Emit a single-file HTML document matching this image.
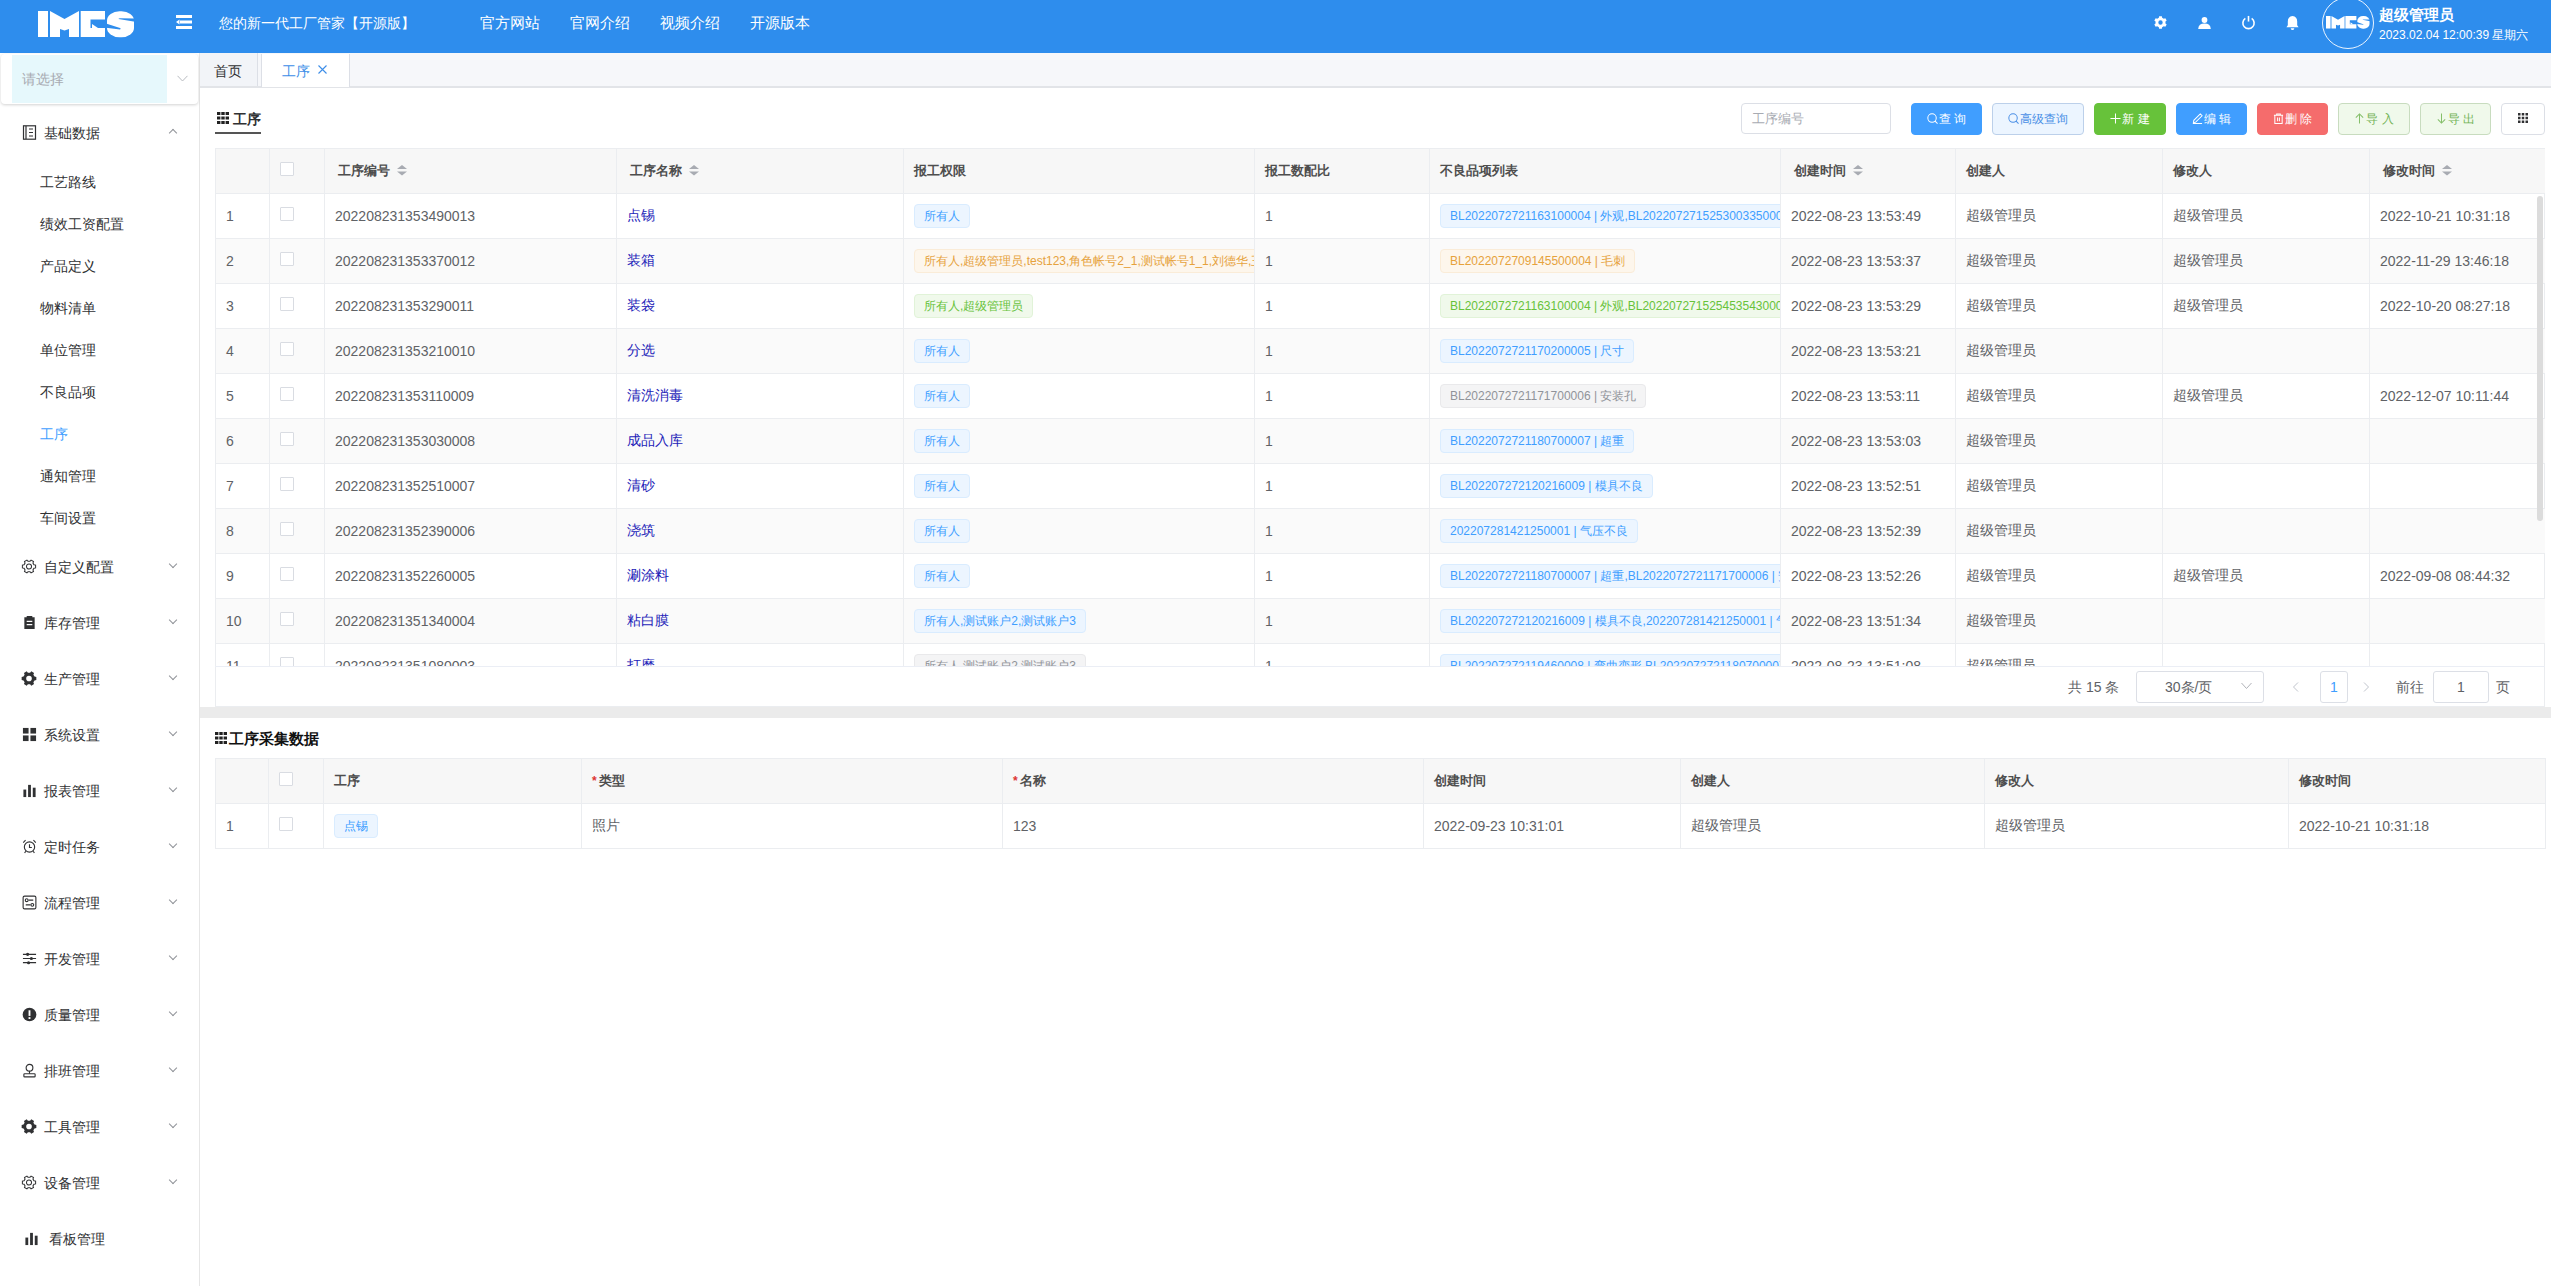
<!DOCTYPE html><html><head><meta charset="utf-8"><style>
*{box-sizing:border-box;margin:0;padding:0}
html,body{width:2551px;height:1286px;overflow:hidden;background:#fff;font-family:"Liberation Sans",sans-serif;color:#606266;font-size:14px}
.abs{position:absolute}
#hdr{position:absolute;left:0;top:0;width:2551px;height:53px;background:#2e8ded}
#hdr .t{position:absolute;color:#fff;font-size:14px;line-height:20px;white-space:nowrap}
#side{position:absolute;left:0;top:53px;width:200px;height:1233px;background:#fff;border-right:1px solid #e6e6e6}
.sel{position:absolute;left:1px;top:1px;width:197px;height:50px;border-radius:4px;box-shadow:0 1px 3px rgba(0,0,0,.18);background:#fff}
.sel .fill{position:absolute;left:11px;top:1px;width:155px;height:48px;background:#e6f8fc}
.mi{position:absolute;white-space:nowrap;font-size:14px;line-height:20px;color:#303133}
.arr{position:absolute;width:7px;height:7px;border-right:1px solid #909399;border-bottom:1px solid #909399}
#tabs{position:absolute;left:200px;top:53px;width:2351px;height:35px;background:#f6f7fa;border-bottom:2px solid #e2e4e8}
.tab{position:absolute;top:0;height:33px;font-size:14px;line-height:33px;white-space:nowrap}
table.g{position:absolute;border-collapse:collapse;table-layout:fixed;font-size:14px}
table.g td,table.g th{border:1px solid #ebedf0;white-space:nowrap;overflow:hidden;text-align:left;font-weight:normal;padding:0 10px;vertical-align:middle}
table.g th{background:#f7f7f7;font-weight:bold;color:#4e4e4e;height:45px;font-size:13px}
table.g td{height:45px;color:#606266}
table.g tr.s td{background:#fafafa}
.cb{display:inline-block;width:14px;height:14px;border:1px solid #d9dce2;border-radius:1px;background:#fff;vertical-align:middle;position:relative;top:-3px}
.tag{display:inline-block;height:24px;line-height:22px;padding:0 9px;font-size:12px;border-radius:4px;border:1px solid;white-space:nowrap;vertical-align:middle}
.tb{background:#ecf5ff;border-color:#d9ecff;color:#409eff}
.to{background:#fdf6ec;border-color:#faecd8;color:#e6a23c}
.tg{background:#f0f9eb;border-color:#e1f3d8;color:#67c23a}
.ti{background:#f4f4f5;border-color:#e9e9eb;color:#909399}
table.g td.nm{color:#2323b8}
.btn{position:absolute;top:103px;height:32px;border-radius:4px;font-size:12px;line-height:30px;text-align:center;border:1px solid;white-space:nowrap}
</style></head><body>
<div id="hdr">
<svg class="abs" style="left:38px;top:11px" width="97" height="27" viewBox="0 0 97 27">
<g fill="#fff">
<rect x="0" y="0" width="10" height="26"/>
<path d="M12 0 L26.5 8 L41 0 V26 H31 V18 L26.5 19.5 L22 18 V26 H12 Z"/>
<path d="M42.7 0 H67 V8.6 H52.5 V17 H67 V26 H42.7 Z"/>
<path d="M54 13 L60 17 H54 Z"/>
<rect x="69" y="0.2" width="27" height="26.1" rx="12.5" ry="9.5"/>
</g><g fill="#2e8ded"><path d="M80.5 8 Q80.5 7.2 82 7.2 L97 7.4 V10.8 Z"/><path d="M68 12.6 L82 17 Q83.5 17.8 82 18.4 L68 16.8 Z"/></g></svg>
<svg class="abs" style="left:175px;top:14px" width="18" height="16" viewBox="0 0 18 16">
<g fill="#fff"><rect x="1" y="1" width="16" height="3"/><rect x="5" y="6.5" width="12" height="3"/><path d="M1 8 L4.5 5.5 V10.5 Z"/><rect x="1" y="12" width="16" height="3"/></g></svg>
<div class="t" style="left:219px;top:13px">您的新一代工厂管家【开源版】</div>
<div class="t" style="left:480px;top:13px;font-size:15px">官方网站</div>
<div class="t" style="left:570px;top:13px;font-size:15px">官网介绍</div>
<div class="t" style="left:660px;top:13px;font-size:15px">视频介绍</div>
<div class="t" style="left:750px;top:13px;font-size:15px">开源版本</div>
<svg class="abs" style="left:2154px;top:16px" width="13" height="13" viewBox="0 0 16 16"><path fill="#fff" fill-rule="evenodd" transform="rotate(90 8 8)" d="M13.86 5.96 L15.83 6.34 L15.83 9.66 L13.86 10.04 L12.69 12.05 L13.35 13.95 L10.47 15.61 L9.16 14.09 L6.84 14.09 L5.53 15.61 L2.65 13.95 L3.31 12.05 L2.14 10.04 L0.17 9.66 L0.17 6.34 L2.14 5.96 L3.31 3.95 L2.65 2.05 L5.53 0.39 L6.84 1.91 L9.16 1.91 L10.47 0.39 L13.35 2.05 L12.69 3.95 Z M8 5.3 A2.7 2.7 0 1 0 8 10.7 A2.7 2.7 0 1 0 8 5.3 Z"/></svg>
<svg class="abs" style="left:2198px;top:17px" width="13" height="12" viewBox="0 0 13 12"><g fill="#fff"><circle cx="6.5" cy="3" r="2.9"/><path d="M0.2 12 Q0.5 6.6 6.5 6.6 Q12.5 6.6 12.8 12 Z"/></g></svg>
<svg class="abs" style="left:2241px;top:15px" width="15" height="15" viewBox="0 0 16 16"><g fill="none" stroke="#fff" stroke-width="1.7"><path d="M4.6 3.6 A6 6 0 1 0 11.4 3.6"/><path d="M8 1 V7"/></g></svg>
<svg class="abs" style="left:2285px;top:15px" width="15" height="15" viewBox="0 0 16 16"><g fill="#fff"><path d="M8 1 Q13 1.5 13 7 V11 L14.5 13 H1.5 L3 11 V7 Q3 1.5 8 1 Z"/><path d="M6 14 H10 Q9.5 16 8 16 Q6.5 16 6 14 Z"/></g></svg>
<div class="abs" style="left:2322px;top:-3px;width:52px;height:52px;border:1px solid #eaf4ff;border-radius:50%"></div>
<svg class="abs" style="left:2326px;top:16px" width="44" height="13" viewBox="0 0 97 27" preserveAspectRatio="none"><g fill="#fff">
<rect x="0" y="0" width="10" height="26"/>
<path d="M12 0 L26.5 8 L41 0 V26 H31 V18 L26.5 19.5 L22 18 V26 H12 Z"/>
<path d="M42.7 0 H67 V8.6 H52.5 V17 H67 V26 H42.7 Z"/>
<path d="M54 13 L60 17 H54 Z"/>
<rect x="69" y="0.2" width="27" height="26.1" rx="12.5" ry="9.5"/>
</g><g fill="#2e8ded"><path d="M80.5 8 Q80.5 7.2 82 7.2 L97 7.4 V10.8 Z"/><path d="M68 12.6 L82 17 Q83.5 17.8 82 18.4 L68 16.8 Z"/></g></svg>
<div class="t" style="left:2379px;top:5px;font-size:15px;font-weight:bold">超级管理员</div>
<div class="t" style="left:2379px;top:25px;font-size:12px">2023.02.04 12:00:39 星期六</div>
</div>
<div id="side">
<div class="sel"><div class="fill"></div><div class="mi" style="left:21px;top:15px;color:#a8abb2">请选择</div><svg style="position:absolute;left:176px;top:21px" width="11" height="7" viewBox="0 0 11 7"><path d="M0.5 0.8 L5.5 6 L10.5 0.8" fill="none" stroke="#b8bbc0" stroke-width="1"/></svg></div>
<div class="abs" style="left:22px;top:72px;width:15px;height:15px"><svg width="15" height="15" viewBox="0 0 15 15"><g fill="none" stroke="#303133" stroke-width="1.2"><rect x="1.5" y="0.8" width="12" height="13.4"/><path d="M4 1 V14 M7 4 H11 M7 7.5 H11 M7 11 H11"/></g></svg></div>
<div class="mi" style="left:44px;top:70px">基础数据</div>
<div class="arr" style="left:170px;top:77px;width:6px;height:6px;transform:rotate(-135deg)"></div>
<div class="mi" style="left:40px;top:119px;color:#303133">工艺路线</div>
<div class="mi" style="left:40px;top:161px;color:#303133">绩效工资配置</div>
<div class="mi" style="left:40px;top:203px;color:#303133">产品定义</div>
<div class="mi" style="left:40px;top:245px;color:#303133">物料清单</div>
<div class="mi" style="left:40px;top:287px;color:#303133">单位管理</div>
<div class="mi" style="left:40px;top:329px;color:#303133">不良品项</div>
<div class="mi" style="left:40px;top:371px;color:#409eff">工序</div>
<div class="mi" style="left:40px;top:413px;color:#303133">通知管理</div>
<div class="mi" style="left:40px;top:455px;color:#303133">车间设置</div>
<div class="abs" style="left:22px;top:506px;width:15px;height:15px"><svg width="16" height="15" viewBox="0 0 16 16" style="margin-left:-1px"><g fill="none" stroke="#303133" stroke-width="1.2" transform="translate(8 8) scale(0.9) translate(-8 -8)"><path d="M13.86 5.96 L15.83 6.34 L15.83 9.66 L13.86 10.04 L12.69 12.05 L13.35 13.95 L10.47 15.61 L9.16 14.09 L6.84 14.09 L5.53 15.61 L2.65 13.95 L3.31 12.05 L2.14 10.04 L0.17 9.66 L0.17 6.34 L2.14 5.96 L3.31 3.95 L2.65 2.05 L5.53 0.39 L6.84 1.91 L9.16 1.91 L10.47 0.39 L13.35 2.05 L12.69 3.95 Z"/><circle cx="8" cy="8" r="3"/></g></svg></div>
<div class="mi" style="left:44px;top:504px">自定义配置</div>
<div class="arr" style="left:170px;top:508px;width:6px;height:6px;transform:rotate(45deg)"></div>
<div class="abs" style="left:22px;top:562px;width:15px;height:15px"><svg width="15" height="15" viewBox="0 0 16 16"><g fill="#303133"><path d="M2.5 2.5 H5 V1 H11 V2.5 H13.5 V15 H2.5 Z M5 6 V7.5 H11 V6 Z M5 9.5 V11 H11 V9.5 Z" fill-rule="evenodd"/></g></svg></div>
<div class="mi" style="left:44px;top:560px">库存管理</div>
<div class="arr" style="left:170px;top:564px;width:6px;height:6px;transform:rotate(45deg)"></div>
<div class="abs" style="left:22px;top:618px;width:15px;height:15px"><svg width="16" height="15" viewBox="0 0 16 16" style="margin-left:-1px"><path fill="#303133" fill-rule="evenodd" d="M13.86 5.96 L15.83 6.34 L15.83 9.66 L13.86 10.04 L12.69 12.05 L13.35 13.95 L10.47 15.61 L9.16 14.09 L6.84 14.09 L5.53 15.61 L2.65 13.95 L3.31 12.05 L2.14 10.04 L0.17 9.66 L0.17 6.34 L2.14 5.96 L3.31 3.95 L2.65 2.05 L5.53 0.39 L6.84 1.91 L9.16 1.91 L10.47 0.39 L13.35 2.05 L12.69 3.95 Z M8 5 A3 3 0 1 0 8 11 A3 3 0 1 0 8 5 Z"/></svg></div>
<div class="mi" style="left:44px;top:616px">生产管理</div>
<div class="arr" style="left:170px;top:620px;width:6px;height:6px;transform:rotate(45deg)"></div>
<div class="abs" style="left:22px;top:674px;width:15px;height:15px"><svg width="15" height="15" viewBox="0 0 16 16"><g fill="#303133"><rect x="1" y="1" width="6" height="6"/><rect x="9" y="1" width="6" height="6"/><rect x="1" y="9" width="6" height="6"/><rect x="9" y="9" width="6" height="6"/></g></svg></div>
<div class="mi" style="left:44px;top:672px">系统设置</div>
<div class="arr" style="left:170px;top:676px;width:6px;height:6px;transform:rotate(45deg)"></div>
<div class="abs" style="left:22px;top:730px;width:15px;height:15px"><svg width="15" height="15" viewBox="0 0 16 16"><g fill="#303133"><rect x="1.5" y="7" width="3" height="8"/><rect x="6.5" y="2" width="3" height="13"/><rect x="11.5" y="5" width="3" height="10"/></g></svg></div>
<div class="mi" style="left:44px;top:728px">报表管理</div>
<div class="arr" style="left:170px;top:732px;width:6px;height:6px;transform:rotate(45deg)"></div>
<div class="abs" style="left:22px;top:786px;width:15px;height:15px"><svg width="15" height="15" viewBox="0 0 16 16"><g fill="none" stroke="#303133" stroke-width="1.2"><circle cx="8" cy="8.5" r="5.5"/><path d="M8 5.5 V9 H10.5 M1.3 3.8 L3.8 1.3 M14.7 3.8 L12.2 1.3 M4 13 L2.8 15 M12 13 L13.2 15"/></g></svg></div>
<div class="mi" style="left:44px;top:784px">定时任务</div>
<div class="arr" style="left:170px;top:788px;width:6px;height:6px;transform:rotate(45deg)"></div>
<div class="abs" style="left:22px;top:842px;width:15px;height:15px"><svg width="15" height="15" viewBox="0 0 16 16"><g fill="none" stroke="#303133" stroke-width="1.2"><rect x="1.2" y="1.2" width="13.6" height="13.6" rx="1.5"/><circle cx="5" cy="5.5" r="1.5"/><circle cx="11" cy="10.5" r="1.5"/><path d="M7 5.5 H12 M4 10.5 H9"/></g></svg></div>
<div class="mi" style="left:44px;top:840px">流程管理</div>
<div class="arr" style="left:170px;top:844px;width:6px;height:6px;transform:rotate(45deg)"></div>
<div class="abs" style="left:22px;top:898px;width:15px;height:15px"><svg width="15" height="15" viewBox="0 0 16 16"><g fill="none" stroke="#303133" stroke-width="1.3"><path d="M1 3.5 H15 M1 8 H15 M1 12.5 H15"/></g><g fill="#303133"><circle cx="6" cy="3.5" r="1.7"/><circle cx="10" cy="8" r="1.7"/><circle cx="7" cy="12.5" r="1.7"/></g></svg></div>
<div class="mi" style="left:44px;top:896px">开发管理</div>
<div class="arr" style="left:170px;top:900px;width:6px;height:6px;transform:rotate(45deg)"></div>
<div class="abs" style="left:22px;top:954px;width:15px;height:15px"><svg width="15" height="15" viewBox="0 0 16 16"><circle cx="8" cy="8" r="7.3" fill="#303133"/><rect x="7" y="3.5" width="2" height="6" fill="#fff"/><rect x="7" y="10.8" width="2" height="2" fill="#fff"/></svg></div>
<div class="mi" style="left:44px;top:952px">质量管理</div>
<div class="arr" style="left:170px;top:956px;width:6px;height:6px;transform:rotate(45deg)"></div>
<div class="abs" style="left:22px;top:1010px;width:15px;height:15px"><svg width="15" height="15" viewBox="0 0 16 16"><g fill="none" stroke="#303133" stroke-width="1.2"><circle cx="8" cy="5" r="3.6"/><path d="M8 8.6 V11.5"/><rect x="2" y="11.5" width="12" height="3.3" rx="0.8"/></g></svg></div>
<div class="mi" style="left:44px;top:1008px">排班管理</div>
<div class="arr" style="left:170px;top:1012px;width:6px;height:6px;transform:rotate(45deg)"></div>
<div class="abs" style="left:22px;top:1066px;width:15px;height:15px"><svg width="16" height="15" viewBox="0 0 16 16" style="margin-left:-1px"><path fill="#303133" fill-rule="evenodd" d="M13.86 5.96 L15.83 6.34 L15.83 9.66 L13.86 10.04 L12.69 12.05 L13.35 13.95 L10.47 15.61 L9.16 14.09 L6.84 14.09 L5.53 15.61 L2.65 13.95 L3.31 12.05 L2.14 10.04 L0.17 9.66 L0.17 6.34 L2.14 5.96 L3.31 3.95 L2.65 2.05 L5.53 0.39 L6.84 1.91 L9.16 1.91 L10.47 0.39 L13.35 2.05 L12.69 3.95 Z M8 5 A3 3 0 1 0 8 11 A3 3 0 1 0 8 5 Z"/></svg></div>
<div class="mi" style="left:44px;top:1064px">工具管理</div>
<div class="arr" style="left:170px;top:1068px;width:6px;height:6px;transform:rotate(45deg)"></div>
<div class="abs" style="left:22px;top:1122px;width:15px;height:15px"><svg width="16" height="15" viewBox="0 0 16 16" style="margin-left:-1px"><g fill="none" stroke="#303133" stroke-width="1.2" transform="translate(8 8) scale(0.9) translate(-8 -8)"><path d="M13.86 5.96 L15.83 6.34 L15.83 9.66 L13.86 10.04 L12.69 12.05 L13.35 13.95 L10.47 15.61 L9.16 14.09 L6.84 14.09 L5.53 15.61 L2.65 13.95 L3.31 12.05 L2.14 10.04 L0.17 9.66 L0.17 6.34 L2.14 5.96 L3.31 3.95 L2.65 2.05 L5.53 0.39 L6.84 1.91 L9.16 1.91 L10.47 0.39 L13.35 2.05 L12.69 3.95 Z"/><circle cx="8" cy="8" r="3"/></g></svg></div>
<div class="mi" style="left:44px;top:1120px">设备管理</div>
<div class="arr" style="left:170px;top:1124px;width:6px;height:6px;transform:rotate(45deg)"></div>
<div class="abs" style="left:24px;top:1178px;width:15px;height:15px"><svg width="15" height="15" viewBox="0 0 16 16"><g fill="#303133"><rect x="1.5" y="7" width="3" height="8"/><rect x="6.5" y="2" width="3" height="13"/><rect x="11.5" y="5" width="3" height="10"/></g></svg></div>
<div class="mi" style="left:49px;top:1176px">看板管理</div>
</div>
<div id="tabs">
<div class="tab" style="left:0;width:58px;padding-left:14px;color:#303133;border-right:1px solid #dcdfe6;background:#f2f4f8;line-height:36px">首页</div>
<div class="tab" style="left:61px;top:1px;height:33px;width:89px;background:#fff;border-left:1px solid #dcdfe6;border-right:1px solid #dcdfe6;padding-left:20px;color:#3d8ee8;line-height:35px">工序<svg width="9" height="9" viewBox="0 0 9 9" style="position:absolute;left:56px;top:11px"><path d="M0.5 0.5 L8.5 8.5 M8.5 0.5 L0.5 8.5" stroke="#3d8ee8" stroke-width="1.1"/></svg></div>
</div>
<div class="abs" style="left:200px;top:88px;width:2351px;height:619px;background:#fff"></div>
<div class="abs" style="left:200px;top:707px;width:2351px;height:11px;background:#ebebeb"></div>
<div class="abs" style="left:217px;top:108px;font-size:14px;line-height:20px;font-weight:bold;color:#303133;white-space:nowrap"><svg width="12" height="12" viewBox="0 0 12 12" style="display:inline-block;vertical-align:middle;margin-top:-2px"><g fill="#222"><rect x="0" y="0" width="3.4" height="3"/><rect x="4.3" y="0" width="3.4" height="3"/><rect x="8.6" y="0" width="3.4" height="3"/><rect x="0" y="4.5" width="3.4" height="3"/><rect x="4.3" y="4.5" width="3.4" height="3"/><rect x="8.6" y="4.5" width="3.4" height="3"/><rect x="0" y="9" width="3.4" height="3"/><rect x="4.3" y="9" width="3.4" height="3"/><rect x="8.6" y="9" width="3.4" height="3"/></g></svg><span style="margin-left:4px;vertical-align:middle">工序</span></div>
<div class="abs" style="left:215px;top:132px;width:46px;height:2px;background:#555"></div>
<div class="abs" style="left:1741px;top:103px;width:150px;height:31px;border:1px solid #dcdfe6;border-radius:4px;background:#fff;font-size:13px;line-height:29px;padding-left:10px;color:#a8abb2">工序编号</div>
<div class="btn" style="left:1911px;width:71px;background:#409eff;border-color:#409eff;color:#fff"><svg width="11" height="11" viewBox="0 0 12 12" style="display:inline-block;vertical-align:middle;margin-top:-2px;margin-right:1px"><g fill="none" stroke="#fff" stroke-width="1.1"><circle cx="5.5" cy="5.5" r="4.6"/><path d="M8.8 8.8 L11.5 11.5"/></g></svg>查 询</div>
<div class="btn" style="left:1992px;width:92px;background:#ecf5ff;border-color:#bcd0ea;color:#4a8fe6"><svg width="11" height="11" viewBox="0 0 12 12" style="display:inline-block;vertical-align:middle;margin-top:-2px;margin-right:1px"><g fill="none" stroke="#4a8fe6" stroke-width="1.1"><circle cx="5.5" cy="5.5" r="4.6"/><path d="M8.8 8.8 L11.5 11.5"/></g></svg>高级查询</div>
<div class="btn" style="left:2094px;width:72px;background:#67c23a;border-color:#67c23a;color:#fff"><svg width="11" height="11" viewBox="0 0 12 12" style="display:inline-block;vertical-align:middle;margin-top:-2px;margin-right:1px"><g fill="none" stroke="#fff" stroke-width="1.1"><path d="M6 0.5 V11.5 M0.5 6 H11.5"/></g></svg>新 建</div>
<div class="btn" style="left:2176px;width:71px;background:#409eff;border-color:#409eff;color:#fff"><svg width="11" height="11" viewBox="0 0 12 12" style="display:inline-block;vertical-align:middle;margin-top:-2px;margin-right:1px"><g fill="none" stroke="#fff" stroke-width="1.1"><path d="M9 1 L11 3 L4 10 L1.5 10.8 L2 8 Z M1 11.5 H11"/></g></svg>编 辑</div>
<div class="btn" style="left:2257px;width:71px;background:#f56c6c;border-color:#f56c6c;color:#fff"><svg width="11" height="11" viewBox="0 0 12 12" style="display:inline-block;vertical-align:middle;margin-top:-2px;margin-right:1px"><g fill="none" stroke="#fff" stroke-width="1.1"><path d="M1 2.5 H11 M4 2.5 V1 H8 V2.5 M2 2.5 V11.5 H10 V2.5 M5 5 V9 M7 5 V9"/></g></svg>删 除</div>
<div class="btn" style="left:2338px;width:72px;background:#f0f9eb;border-color:#c8dcbf;color:#72b355"><svg width="11" height="11" viewBox="0 0 12 12" style="display:inline-block;vertical-align:middle;margin-top:-2px;margin-right:1px"><g fill="none" stroke="#85bf6a" stroke-width="1.1"><path d="M6 11.5 V1 M2 5 L6 1 L10 5"/></g></svg>导 入</div>
<div class="btn" style="left:2420px;width:71px;background:#f0f9eb;border-color:#c8dcbf;color:#72b355"><svg width="11" height="11" viewBox="0 0 12 12" style="display:inline-block;vertical-align:middle;margin-top:-2px;margin-right:1px"><g fill="none" stroke="#85bf6a" stroke-width="1.1"><path d="M6 0.5 V11 M2 7 L6 11 L10 7"/></g></svg>导 出</div>
<div class="btn" style="left:2501px;width:44px;background:#fff;border-color:#dcdfe6;color:#303133"></div>
<svg class="abs" style="left:2518px;top:113px" width="10" height="10" viewBox="0 0 12 12"><g fill="#303133"><rect x="0" y="0" width="3" height="3"/><rect x="4.5" y="0" width="3" height="3"/><rect x="9" y="0" width="3" height="3"/><rect x="0" y="4.5" width="3" height="3"/><rect x="4.5" y="4.5" width="3" height="3"/><rect x="9" y="4.5" width="3" height="3"/><rect x="0" y="9" width="3" height="3"/><rect x="4.5" y="9" width="3" height="3"/><rect x="9" y="9" width="3" height="3"/></g></svg>
<div class="abs" style="left:215px;top:148px;width:2330px;height:559px;border:1px solid #ebedf0;border-top:none"></div>
<div class="abs" style="left:215px;top:148px;width:2330px;height:519px;overflow:hidden">
<table class="g" style="left:0;top:0;width:2330px"><colgroup><col style="width:54px"><col style="width:55px"><col style="width:292px"><col style="width:287px"><col style="width:351px"><col style="width:175px"><col style="width:351px"><col style="width:175px"><col style="width:207px"><col style="width:207px"><col style="width:176px"></colgroup><tr><th></th><th><span class="cb"></span></th><th style="padding-left:13px">工序编号<svg width="10" height="11" viewBox="0 0 10 11" style="display:inline-block;vertical-align:middle;margin-left:7px;margin-top:-2px"><g fill="#a8abb2"><path d="M5 0 L10 4 H0 Z"/><path d="M0 6.5 H10 L5 10.5 Z"/></g></svg></th><th style="padding-left:13px">工序名称<svg width="10" height="11" viewBox="0 0 10 11" style="display:inline-block;vertical-align:middle;margin-left:7px;margin-top:-2px"><g fill="#a8abb2"><path d="M5 0 L10 4 H0 Z"/><path d="M0 6.5 H10 L5 10.5 Z"/></g></svg></th><th>报工权限</th><th>报工数配比</th><th>不良品项列表</th><th style="padding-left:13px">创建时间<svg width="10" height="11" viewBox="0 0 10 11" style="display:inline-block;vertical-align:middle;margin-left:7px;margin-top:-2px"><g fill="#a8abb2"><path d="M5 0 L10 4 H0 Z"/><path d="M0 6.5 H10 L5 10.5 Z"/></g></svg></th><th>创建人</th><th>修改人</th><th style="padding-left:13px">修改时间<svg width="10" height="11" viewBox="0 0 10 11" style="display:inline-block;vertical-align:middle;margin-left:7px;margin-top:-2px"><g fill="#a8abb2"><path d="M5 0 L10 4 H0 Z"/><path d="M0 6.5 H10 L5 10.5 Z"/></g></svg></th></tr><tr><td>1</td><td><span class="cb"></span></td><td>202208231353490013</td><td class="nm">点锡</td><td><span class="tag tb">所有人</span></td><td>1</td><td><span class="tag tb">BL2022072721163100004 | 外观,BL2022072715253003350000 | 尺寸</span></td><td>2022-08-23 13:53:49</td><td>超级管理员</td><td>超级管理员</td><td>2022-10-21 10:31:18</td></tr><tr class="s"><td>2</td><td><span class="cb"></span></td><td>202208231353370012</td><td class="nm">装箱</td><td><span class="tag to">所有人,超级管理员,test123,角色帐号2_1,测试帐号1_1,刘德华,王五</span></td><td>1</td><td><span class="tag to">BL2022072709145500004 | 毛刺</span></td><td>2022-08-23 13:53:37</td><td>超级管理员</td><td>超级管理员</td><td>2022-11-29 13:46:18</td></tr><tr><td>3</td><td><span class="cb"></span></td><td>202208231353290011</td><td class="nm">装袋</td><td><span class="tag tg">所有人,超级管理员</span></td><td>1</td><td><span class="tag tg">BL2022072721163100004 | 外观,BL2022072715254535430000 | 尺寸</span></td><td>2022-08-23 13:53:29</td><td>超级管理员</td><td>超级管理员</td><td>2022-10-20 08:27:18</td></tr><tr class="s"><td>4</td><td><span class="cb"></span></td><td>202208231353210010</td><td class="nm">分选</td><td><span class="tag tb">所有人</span></td><td>1</td><td><span class="tag tb">BL2022072721170200005 | 尺寸</span></td><td>2022-08-23 13:53:21</td><td>超级管理员</td><td></td><td></td></tr><tr><td>5</td><td><span class="cb"></span></td><td>202208231353110009</td><td class="nm">清洗消毒</td><td><span class="tag tb">所有人</span></td><td>1</td><td><span class="tag ti">BL2022072721171700006 | 安装孔</span></td><td>2022-08-23 13:53:11</td><td>超级管理员</td><td>超级管理员</td><td>2022-12-07 10:11:44</td></tr><tr class="s"><td>6</td><td><span class="cb"></span></td><td>202208231353030008</td><td class="nm">成品入库</td><td><span class="tag tb">所有人</span></td><td>1</td><td><span class="tag tb">BL2022072721180700007 | 超重</span></td><td>2022-08-23 13:53:03</td><td>超级管理员</td><td></td><td></td></tr><tr><td>7</td><td><span class="cb"></span></td><td>202208231352510007</td><td class="nm">清砂</td><td><span class="tag tb">所有人</span></td><td>1</td><td><span class="tag tb">BL202207272120216009 | 模具不良</span></td><td>2022-08-23 13:52:51</td><td>超级管理员</td><td></td><td></td></tr><tr class="s"><td>8</td><td><span class="cb"></span></td><td>202208231352390006</td><td class="nm">浇筑</td><td><span class="tag tb">所有人</span></td><td>1</td><td><span class="tag tb">202207281421250001 | 气压不良</span></td><td>2022-08-23 13:52:39</td><td>超级管理员</td><td></td><td></td></tr><tr><td>9</td><td><span class="cb"></span></td><td>202208231352260005</td><td class="nm">涮涂料</td><td><span class="tag tb">所有人</span></td><td>1</td><td><span class="tag tb">BL2022072721180700007 | 超重,BL2022072721171700006 | 安装孔</span></td><td>2022-08-23 13:52:26</td><td>超级管理员</td><td>超级管理员</td><td>2022-09-08 08:44:32</td></tr><tr class="s"><td>10</td><td><span class="cb"></span></td><td>202208231351340004</td><td class="nm">粘白膜</td><td><span class="tag tb">所有人,测试账户2,测试账户3</span></td><td>1</td><td><span class="tag tb">BL202207272120216009 | 模具不良,202207281421250001 | 气压不良</span></td><td>2022-08-23 13:51:34</td><td>超级管理员</td><td></td><td></td></tr><tr><td>11</td><td><span class="cb"></span></td><td>202208231351080003</td><td class="nm">打磨</td><td><span class="tag ti">所有人,测试账户2,测试账户3</span></td><td>1</td><td><span class="tag tb">BL202207272119460008 | 弯曲变形,BL2022072721180700007 | 超重</span></td><td>2022-08-23 13:51:08</td><td>超级管理员</td><td></td><td></td></tr></table>
</div>
<div class="abs" style="left:2537px;top:196px;width:6px;height:325px;border-radius:3px;background:#dcdcdc"></div>
<div class="abs" style="left:215px;top:666px;width:2330px;height:1px;background:#ebeef5"></div>
<div class="abs" style="left:2068px;top:677px;font-size:14px;line-height:20px;color:#606266;white-space:nowrap">共 15 条</div>
<div class="abs" style="left:2136px;top:671px;width:128px;height:32px;border:1px solid #dcdfe6;border-radius:3px;font-size:14px;line-height:30px;padding-left:28px;color:#606266">30条/页</div>
<svg class="abs" style="left:2241px;top:682px" width="11" height="8" viewBox="0 0 11 8"><path d="M0.5 1 L5.5 6.5 L10.5 1" fill="none" stroke="#b0b3b8" stroke-width="1"/></svg>
<svg class="abs" style="left:2292px;top:682px" width="7" height="10" viewBox="0 0 7 10"><path d="M6 0.5 L1.5 5 L6 9.5" fill="none" stroke="#c0c4cc" stroke-width="1"/></svg>
<div class="abs" style="left:2320px;top:671px;width:28px;height:32px;border:1px solid #dcdfe6;border-radius:3px;font-size:14px;line-height:30px;text-align:center;color:#409eff">1</div>
<svg class="abs" style="left:2363px;top:682px" width="7" height="10" viewBox="0 0 7 10"><path d="M1 0.5 L5.5 5 L1 9.5" fill="none" stroke="#c0c4cc" stroke-width="1"/></svg>
<div class="abs" style="left:2396px;top:677px;font-size:14px;line-height:20px;color:#606266">前往</div>
<div class="abs" style="left:2433px;top:671px;width:56px;height:32px;border:1px solid #dcdfe6;border-radius:3px;font-size:14px;line-height:30px;text-align:center;color:#606266">1</div>
<div class="abs" style="left:2496px;top:677px;font-size:14px;line-height:20px;color:#606266">页</div>
<div class="abs" style="left:215px;top:728px;font-size:15px;line-height:20px;font-weight:bold;color:#303133;white-space:nowrap"><svg width="12" height="12" viewBox="0 0 12 12" style="display:inline-block;vertical-align:middle;margin-top:-2px"><g fill="#222"><rect x="0" y="0" width="3.4" height="3"/><rect x="4.3" y="0" width="3.4" height="3"/><rect x="8.6" y="0" width="3.4" height="3"/><rect x="0" y="4.5" width="3.4" height="3"/><rect x="4.3" y="4.5" width="3.4" height="3"/><rect x="8.6" y="4.5" width="3.4" height="3"/><rect x="0" y="9" width="3.4" height="3"/><rect x="4.3" y="9" width="3.4" height="3"/><rect x="8.6" y="9" width="3.4" height="3"/></g></svg><span style="vertical-align:middle;margin-left:2px;color:#111">工序采集数据</span></div>
<table class="g" style="left:215px;top:758px;width:2331px"><colgroup><col style="width:53px"><col style="width:55px"><col style="width:258px"><col style="width:421px"><col style="width:421px"><col style="width:257px"><col style="width:304px"><col style="width:304px"><col style="width:257px"></colgroup><tr><th></th><th><span class="cb"></span></th><th>工序</th><th><span style="color:#d33;font-size:12px;margin-right:2px">*</span>类型</th><th><span style="color:#d33;font-size:12px;margin-right:2px">*</span>名称</th><th>创建时间</th><th>创建人</th><th>修改人</th><th>修改时间</th></tr><tr><td>1</td><td><span class="cb"></span></td><td><span class="tag tb">点锡</span></td><td>照片</td><td>123</td><td>2022-09-23 10:31:01</td><td>超级管理员</td><td>超级管理员</td><td>2022-10-21 10:31:18</td></tr></table>
</body></html>
